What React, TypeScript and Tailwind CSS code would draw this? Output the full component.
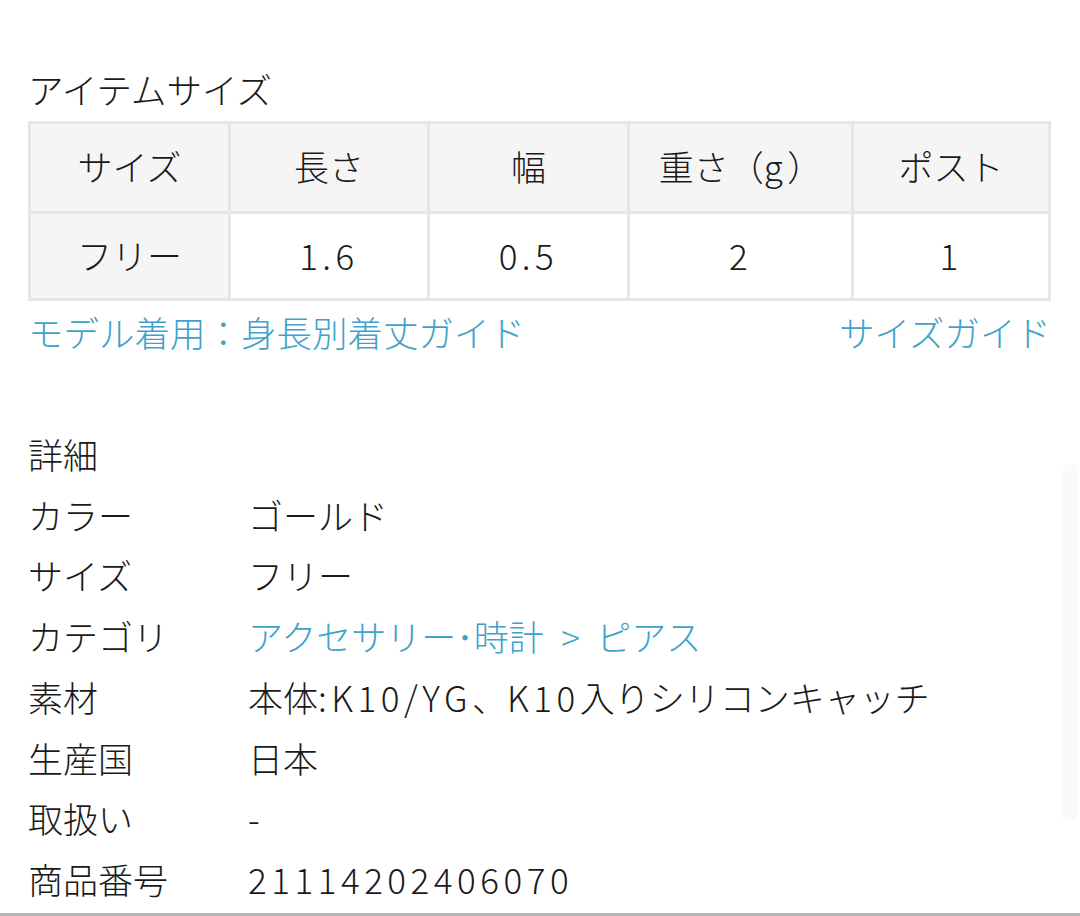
import React from "react";

const font = { fontFamily: '"Noto Sans CJK JP", sans-serif' };

function T({ text }: { text: string }) {
  const parts = text.split(/([\x21-\x7E]+)/).filter((p) => p.length > 0);
  return (
    <>
      {parts.map((p, i) =>
        /^[\x21-\x7E]+$/.test(p) ? (
          <span key={i} className="font-light tracking-[4.5px]">
            {p}
          </span>
        ) : (
          <span key={i} className="font-light">
            {p}
          </span>
        )
      )}
    </>
  );
}

const headers = ["サイズ", "長さ", "幅", "重さ（g）", "ポスト"];
const values = ["フリー", "1.6", "0.5", "2", "1"];
const widths = ["w-[200px]", "w-[199px]", "w-[200px]", "w-[224px]", "w-[200px]"];

const details: { label: string; value: string; link?: boolean }[] = [
  { label: "カラー", value: "ゴールド" },
  { label: "サイズ", value: "フリー" },
  { label: "カテゴリ", value: "アクセサリー･時計\u2002>\u2004ピアス", link: true },
  { label: "素材", value: "本体:K10/YG、K10入りシリコンキャッチ" },
  { label: "生産国", value: "日本" },
  { label: "取扱い", value: "-" },
  { label: "商品番号", value: "21114202406070" },
];

export default function App() {
  return (
    <div className="relative w-[1080px] h-[916px] bg-white text-[#1a1a1a] overflow-hidden" style={font}>
      <div className="pl-[28px] pr-[29px] pt-[67px]">
        <div className="text-[35.5px] leading-[44px] h-[54px]">
          <T text="アイテムサイズ" />
        </div>
        <div className="flex flex-col border-[3px] border-[#e6e6e6] w-[1023px]">
          <div className="flex h-[87px] bg-[#f5f5f5]">
            {headers.map((h, i) => (
              <div
                key={i}
                className={`${widths[i]} ${i < 4 ? "border-r-[3px] border-[#e6e6e6]" : "flex-1"} flex items-center justify-center text-[35px] leading-none pb-[5px]`}
              >
                <T text={h} />
              </div>
            ))}
          </div>
          <div className="flex h-[87px] border-t-[3px] border-[#e6e6e6]">
            {values.map((v, i) => (
              <div
                key={i}
                className={`${widths[i]} ${i < 4 ? "border-r-[3px] border-[#e6e6e6]" : "flex-1"} ${i === 0 ? "bg-[#f5f5f5]" : "bg-white"} flex items-center justify-center text-[35px] leading-none pb-[4px]`}
              >
                <T text={v} />
              </div>
            ))}
          </div>
        </div>
        <div className="flex justify-between items-center h-[62px] text-[35.5px] text-[#40a2ca] w-[1023px]">
          <span>
            <T text="モデル着用：身長別着丈ガイド" />
          </span>
          <span>
            <T text="サイズガイド" />
          </span>
        </div>
        <div className="mt-[61px] text-[35px] leading-[60.7px]">
          <T text="詳細" />
        </div>
        {details.map((d, i) => (
          <div key={i} className="flex text-[35px] leading-[60.7px]">
            <div className="w-[220px]">
              <T text={d.label} />
            </div>
            <div className={d.link ? "text-[#40a2ca]" : ""}>
              <T text={d.value} />
            </div>
          </div>
        ))}
      </div>
      <div className="absolute left-[1063px] top-[465px] w-[14px] h-[355px] bg-[#fafafa]" />
      <div className="absolute left-0 bottom-0 w-full h-[3px] bg-[#b5b5b5]" />
    </div>
  );
}
